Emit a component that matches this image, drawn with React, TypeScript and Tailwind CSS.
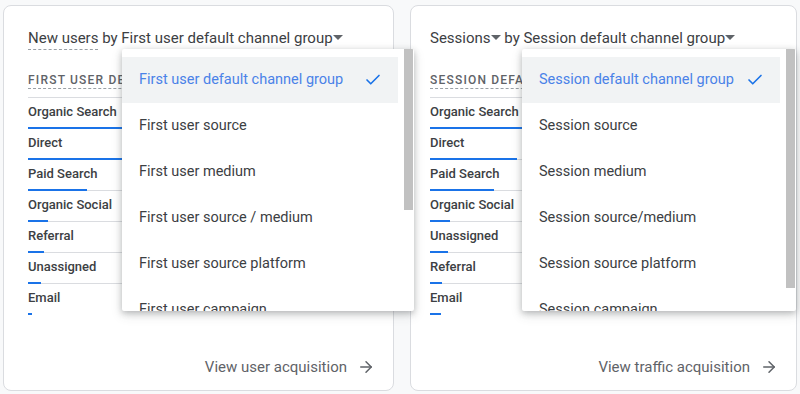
import { Check, ArrowRight } from 'lucide-react';

type Row = { label: string; bar: number };

// bar widths in px, as measured on the report
const userRows: Row[] = [
  { label: "Organic Search", bar: 140 },
  { label: "Direct", bar: 120 },
  { label: "Paid Search", bar: 59 },
  { label: "Organic Social", bar: 20 },
  { label: "Referral", bar: 16 },
  { label: "Unassigned", bar: 13 },
  { label: "Email", bar: 4 },
];

const sessionRows: Row[] = [
  { label: "Organic Search", bar: 140 },
  { label: "Direct", bar: 87 },
  { label: "Paid Search", bar: 64 },
  { label: "Organic Social", bar: 20 },
  { label: "Unassigned", bar: 18 },
  { label: "Referral", bar: 12 },
  { label: "Email", bar: 11 },
];

const userOptions = [
  "First user default channel group",
  "First user source",
  "First user medium",
  "First user source / medium",
  "First user source platform",
  "First user campaign",
];

const sessionOptions = [
  "Session default channel group",
  "Session source",
  "Session medium",
  "Session source/medium",
  "Session source platform",
  "Session campaign",
];

const Caret = () => (
  <span className="inline-block w-0 h-0 border-l-[5px] border-r-[5px] border-t-[5px] border-l-transparent border-r-transparent border-t-[#5f6368] align-middle mb-[3px]" />
);

const Dropdown = ({ options, className, thumb }: { options: string[]; className: string; thumb: string }) => (
  <div className={`absolute top-[43px] h-[262px] bg-white shadow-[0_2px_6px_rgba(60,64,67,0.3),0_4px_12px_rgba(60,64,67,0.15)] rounded-[2px] overflow-hidden z-10 ${className}`}>
    <div className="pt-[8px] mr-[16px]">
      {options.map((opt, i) => (
        <div
          key={opt}
          className={`h-[46px] flex items-center justify-between pl-[17px] pr-[16px] text-[14.5px] ${
            i === 0 ? 'bg-[#f1f3f4] text-[#4a82e8]' : 'text-[#3c4043]'
          }`}
        >
          <span>{opt}</span>
          {i === 0 && <Check className="w-[18px] h-[18px] text-[#1a73e8]" strokeWidth={2.2} />}
        </div>
      ))}
    </div>
    <div className={`absolute top-0 right-[1px] w-[9px] bg-[#c1c1c1] ${thumb}`} />
  </div>
);

const Card = ({
  title,
  header,
  rows,
  link,
  dropdown,
  className,
  pad,
}: {
  title: React.ReactNode;
  header: string;
  rows: Row[];
  link: string;
  dropdown: React.ReactNode;
  className: string;
  pad: string;
}) => (
  <div className={`relative h-[386px] bg-white border border-[#dadce0] rounded-[8px] flex flex-col ${className}`}>
    <div className={`${pad} pt-[23px] text-[15px] leading-[18px] text-[#3c4043]`}>{title}</div>
    <div className={`${pad} pr-[24px] mt-[20px]`}>
      <div className="pb-[6px] border-b border-[#dadce0]">
        <span className="text-[12px] font-medium tracking-[1.2px] text-[#5f6368] border-b border-dashed border-[#9aa0a6] pb-[1px] whitespace-nowrap">
          {header}
        </span>
      </div>
      {rows.map((r, i) => (
        <div key={r.label} className="pt-[5px]">
          <div className="text-[13px] font-medium leading-[18px] text-[#3c4043]">{r.label}</div>
          <div className={`relative mt-[7px] h-[1px] ${i < rows.length - 1 ? 'bg-[#dadce0]' : ''}`}>
            <div className="absolute left-0 top-[-1px] h-[2px] bg-[#1a73e8]" style={{ width: r.bar }} />
          </div>
        </div>
      ))}
    </div>
    <div className="mt-auto mb-[12px] pr-[18px] flex items-center justify-end gap-[10px] text-[15px] text-[#5f6368]">
      <span>{link}</span>
      <ArrowRight className="w-[18px] h-[18px] text-[#5f6368]" strokeWidth={2} />
    </div>
    {dropdown}
  </div>
);

export default function App() {
  return (
    <div className="w-[800px] h-[394px] bg-[#f8f9fa] flex items-start pt-[5px] pl-[3px] gap-[16px] overflow-hidden font-['Roboto',sans-serif]">
      <Card
        className="w-[391px] z-20"
        pad="pl-[24px]"
        title={
          <span className="whitespace-nowrap">
            <span className="border-b border-dashed border-[#9aa0a6] pb-[2px]">New users</span> by First user default channel group
            <Caret />
          </span>
        }
        header="FIRST USER DEFAULT CHANNEL GROUP"
        rows={userRows}
        link="View user acquisition"
        dropdown={<Dropdown options={userOptions} className="left-[118px] w-[292px]" thumb="h-[161px]" />}
      />
      <Card
        className="w-[387px]"
        pad="pl-[19px]"
        title={
          <span className="whitespace-nowrap">
            Sessions<Caret /> by Session default channel group
            <Caret />
          </span>
        }
        header="SESSION DEFAULT CHANNEL GROUP"
        rows={sessionRows}
        link="View traffic acquisition"
        dropdown={<Dropdown options={sessionOptions} className="left-[111px] w-[274px]" thumb="h-[239px]" />}
      />
    </div>
  );
}
